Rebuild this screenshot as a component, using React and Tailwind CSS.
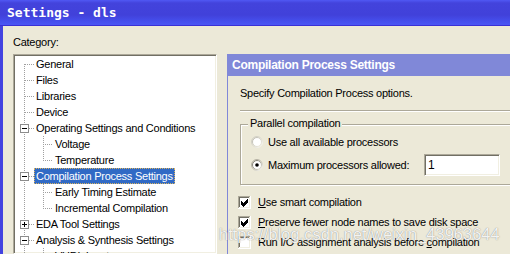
import React from "react";

const tree = [
	{ label: "General", level: 1 },
	{ label: "Files", level: 1 },
	{ label: "Libraries", level: 1 },
	{ label: "Device", level: 1 },
	{ label: "Operating Settings and Conditions", level: 1, toggle: "minus" },
	{ label: "Voltage", level: 2 },
	{ label: "Temperature", level: 2, last: true },
	{ label: "Compilation Process Settings", level: 1, toggle: "minus", selected: true },
	{ label: "Early Timing Estimate", level: 2 },
	{ label: "Incremental Compilation", level: 2, last: true },
	{ label: "EDA Tool Settings", level: 1, toggle: "plus" },
	{ label: "Analysis & Synthesis Settings", level: 1, toggle: "minus" },
	{ label: "VHDL Input", level: 2 },
	{ label: "Verilog HDL Input", level: 2 },
];

const dot = { stroke: "#a0a0a0", strokeDasharray: "1 1" };

function Gutter({ item, first }) {
	const w = item.level === 1 ? 19 : 38;
	return (
		<svg width={w} height="16" shapeRendering="crispEdges" className="shrink-0">
			<line x1="9.5" y1={first ? 8 : 0} x2="9.5" y2="16" {...dot} />
			{item.level === 1 && <line x1="10" y1="8.5" x2="19" y2="8.5" {...dot} />}
			{item.level === 2 && (
				<>
					<line x1="28.5" y1="0" x2="28.5" y2={item.last ? 9 : 16} {...dot} />
					<line x1="30" y1="8.5" x2="38" y2="8.5" {...dot} />
				</>
			)}
			{item.toggle && (
				<g>
					<rect x="5.5" y="4.5" width="8" height="8" fill="#fff" stroke="#8c8c8c" />
					<line x1="7" y1="8.5" x2="12" y2="8.5" stroke="#000" />
					{item.toggle === "plus" && (
						<line x1="9.5" y1="6" x2="9.5" y2="11" stroke="#000" />
					)}
				</g>
			)}
		</svg>
	);
}

function Radio({ id, checked, light }) {
	return (
		<svg width="12" height="12" className="shrink-0">
			<defs>
				<linearGradient id={`${id}o`} x1="0" y1="0" x2="1" y2="1">
					<stop offset="0" stopColor={light ? "#c9c7bd" : "#aca899"} />
					<stop offset="0.55" stopColor={light ? "#dedcd3" : "#c4c1b5"} />
					<stop offset="1" stopColor="#ffffff" />
				</linearGradient>
				<linearGradient id={`${id}i`} x1="0" y1="0" x2="1" y2="1">
					<stop offset="0" stopColor={light ? "#b5b3a9" : "#716f64"} />
					<stop offset="0.55" stopColor={light ? "#d8d6cc" : "#a9a79c"} />
					<stop offset="1" stopColor="#f1efe2" />
				</linearGradient>
			</defs>
			<circle cx="6" cy="6" r="5.5" fill="none" stroke={`url(#${id}o)`} />
			<circle cx="6" cy="6" r="4.5" fill="#fff" stroke={`url(#${id}i)`} />
			{checked && <circle cx="6" cy="6" r="1.8" fill="#000" />}
		</svg>
	);
}

function Check({ checked }) {
	return (
		<svg width="13" height="13" shapeRendering="crispEdges" className="shrink-0">
			<rect x="0" y="0" width="13" height="13" fill="#fff" />
			<path d="M0.5 12V0.5H12" fill="none" stroke="#aca899" />
			<path d="M1.5 11V1.5H11" fill="none" stroke="#716f64" />
			<path d="M0.5 12.5H12.5V0" fill="none" stroke="#ffffff" />
			<path d="M1.5 11.5H11.5V1" fill="none" stroke="#f1efe2" />
			{checked && (
				<g fill="none" stroke="#000">
					<polyline points="3,5.5 5.5,8 10,3.5" />
					<polyline points="3,6.5 5.5,9 10,4.5" />
					<polyline points="3,7.5 5.5,10 10,5.5" />
				</g>
			)}
		</svg>
	);
}

export default function App() {
	return (
		<div className="relative w-[510px] h-[254px] overflow-hidden flex flex-col font-['Liberation_Sans',Arial,sans-serif] text-[11px] tracking-[-0.25px] text-black">
			<div className="h-[26px] shrink-0 flex items-center pl-[7px] border-b border-[#3a30d6] bg-[linear-gradient(to_bottom,#5058f4_0%,#4343dc_12%,#4141da_60%,#4650ef_88%,#4a56f4_100%)]">
				<span className="font-['DejaVu_Sans_Mono',monospace] font-bold text-[13px] tracking-normal text-white leading-none">
					Settings - dls
				</span>
			</div>

			<div className="flex-1 flex bg-[#ECE9D8] border-l-[3px] border-[#4343e0] min-h-0">
				<div className="flex flex-col pl-[10px] w-[214px] shrink-0">
					<div className="pt-[10px] leading-[13px]">Category:</div>
					<div className="mt-[5px] flex-1 bg-white border border-t-[#aca899] border-l-[#aca899] border-r-white border-b-white shadow-[inset_1px_1px_0_#716f64,inset_-1px_-1px_0_#f1efe2] pt-[1px] pl-[1px] overflow-hidden">
						{tree.map((item, i) => (
							<div key={item.label} className="flex h-[16px] items-center">
								<Gutter item={item} first={i === 0} />
								<span
									className={`px-[2px] h-[16px] leading-[17px] whitespace-nowrap ${
										item.selected
											? "bg-[#316AC5] text-white outline-1 outline-dotted outline-[#d9b360] -outline-offset-1"
											: ""
									}`}
								>
									{item.label}
								</span>
							</div>
						))}
					</div>
				</div>

				<div className="ml-[10px] mt-[28px] w-[300px] shrink-0 flex flex-col border-l border-[#8088d8]">
					<div className="h-[22px] flex items-center pl-[4px] bg-[#8088d8] text-white font-bold text-[12px]">
						Compilation Process Settings
					</div>
					<div className="pl-[12px] pt-[11px] flex flex-col">
						<div className="leading-[13px]">Specify Compilation Process options.</div>
						<div className="mt-[10px] border-t border-[#aca899] border-b border-b-white" />

						<div className="relative mt-[12px] h-[61px] border border-[#aca899] shadow-[inset_1px_1px_0_#fff,1px_1px_0_#fff] pl-[10px] pt-[6px] flex flex-col gap-[1px]">
							<span className="absolute left-[7px] -top-[8px] px-[2px] bg-[#ECE9D8] leading-[13px]">
								Parallel compilation
							</span>
							<div className="h-[22px] flex items-center gap-[5px]">
								<Radio id="r1" light />
								<span>Use all available processors</span>
							</div>
							<div className="h-[22px] flex items-center">
								<Radio id="r2" checked />
								<span className="ml-[5px] w-[156px]">Maximum processors allowed:</span>
								<div className="w-[76px] h-[22px] bg-white border border-t-[#aca899] border-l-[#aca899] border-r-white border-b-white shadow-[inset_1px_1px_0_#716f64,inset_-1px_-1px_0_#f1efe2] pl-[3px] flex items-center text-[12px] tracking-normal">
									1
								</div>
							</div>
						</div>

						<div className="mt-[7px] -ml-[2px] flex flex-col">
							<div className="h-[20px] flex items-center gap-[7px]">
								<Check checked />
								<span>
									<u>U</u>se smart compilation
								</span>
							</div>
							<div className="h-[20px] flex items-center gap-[7px]">
								<Check checked />
								<span>
									<u>P</u>reserve fewer node names to save disk space
								</span>
							</div>
							<div className="h-[20px] flex items-center gap-[7px]">
								<Check />
								<span>
									Run I/O assignment analysis before <u>c</u>ompilation
								</span>
							</div>
						</div>
					</div>
				</div>
			</div>

			<div className="absolute left-[219px] top-[226px] text-[16.5px] leading-none tracking-normal text-white/90 [text-shadow:0_0_1px_rgba(90,90,90,0.85)] whitespace-nowrap pointer-events-none">
				https://blog.csdn.net/weixin_43963644
			</div>
		</div>
	);
}
